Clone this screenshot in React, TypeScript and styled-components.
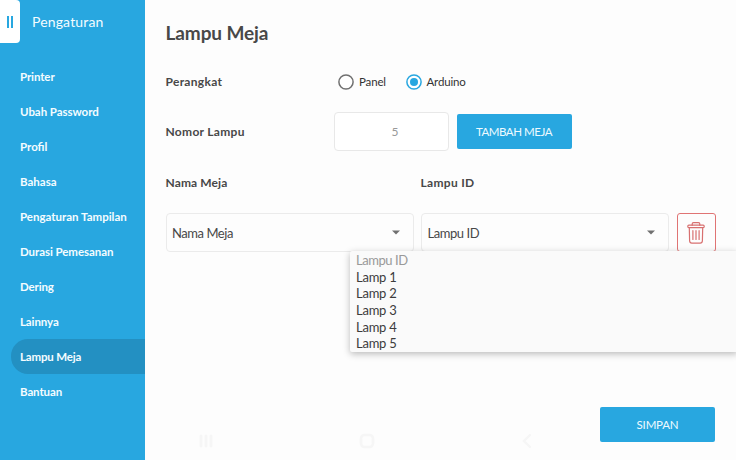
import React from "react";
import styled, { createGlobalStyle } from "styled-components";

const blue = "#28a7e0";

const GlobalStyle = createGlobalStyle`
  *, *::before, *::after { box-sizing: border-box; }
  body {
    margin: 0;
    background: #fdfdfd;
    color: #484848;
    font-family: Lato, "Open Sans", sans-serif;
    overflow: hidden;
  }
  button { font: inherit; cursor: pointer; }
`;

const Screen = styled.div`
  display: flex;
  width: 736px;
  height: 460px;
`;

const Sidebar = styled.aside`
  flex: none;
  width: 145px;
  background: ${blue};
  color: #f4fcff;
`;

const SidebarHeader = styled.header`
  display: flex;
  height: 59px;
`;

const Toggle = styled.button`
  display: flex;
  align-items: center;
  justify-content: center;
  gap: 2px;
  width: 20px;
  height: 43px;
  padding: 0;
  border: 0;
  border-radius: 0 4px 4px 0;
  background: #fff;
`;

const ToggleBar = styled.span`
  width: 2px;
  height: 12px;
  background: ${blue};
`;

const SidebarTitle = styled.span`
  margin-left: 12px;
  font-size: 14px;
  line-height: 44px;
  letter-spacing: 0.15px;
`;

const MenuItem = styled.a<{ $active?: boolean }>`
  display: block;
  height: 35.05px;
  margin-left: 11px;
  padding-left: 9px;
  border-radius: 17px 0 0 17px;
  background: ${(p) => (p.$active ? "#2390c2" : "transparent")};
  font-size: 11.5px;
  font-weight: 700;
  line-height: 36px;
  white-space: nowrap;
`;

const Spaced = styled.span<{ $spacing: number }>`
  letter-spacing: ${(p) => p.$spacing}px;
`;

const Main = styled.main`
  display: flex;
  flex-direction: column;
  flex: 1;
  min-width: 0;
  padding: 13px 21px 0 20.5px;
`;

const Title = styled.h1`
  margin: 0;
  font-size: 19px;
  font-weight: 700;
  line-height: 40px;
  letter-spacing: -0.1px;
`;

const FieldRow = styled.div<{ $height: number }>`
  display: flex;
  align-items: center;
  height: ${(p) => p.$height}px;
`;

const Label = styled.span<{ $width: number; $spacing?: number }>`
  width: ${(p) => p.$width}px;
  font-size: 12px;
  font-weight: 700;
  letter-spacing: ${(p) => p.$spacing ?? 0.3}px;
`;

const Radio = styled.label<{ $width: number }>`
  display: flex;
  align-items: center;
  gap: 5px;
  width: ${(p) => p.$width}px;
  color: #333;
  font-size: 11.5px;
  letter-spacing: -0.15px;
`;

const NumberInput = styled.input`
  width: 115px;
  height: 39px;
  margin-right: 8px;
  border: 1px solid #e8e8e8;
  border-radius: 4px;
  background: #fff;
  color: #999;
  font: 12px Lato, sans-serif;
  padding: 0 0 0 8px;
  text-align: center;
  outline: none;
`;

const PrimaryButton = styled.button<{ $spacing?: number }>`
  width: 115px;
  height: 35px;
  padding: 0;
  border: 0;
  border-radius: 2px;
  background: ${blue};
  color: #effaff;
  font-size: 11.5px;
  letter-spacing: ${(p) => p.$spacing ?? -0.2}px;
`;

const ColumnLabels = styled.div`
  display: grid;
  grid-template-columns: 255px 1fr;
  align-items: center;
  height: 60px;
  padding-bottom: 2px;
`;

const LampRow = styled.div`
  display: grid;
  grid-template-columns: 248px 248px 39px;
  gap: 7.5px;
  height: 39px;
`;

const SelectField = styled.div`
  position: relative;
  display: flex;
  align-items: center;
  justify-content: space-between;
  padding: 0 13px 0 5.5px;
  border: 1px solid #ebebeb;
  border-radius: 4px;
  font-size: 13px;
  letter-spacing: -0.45px;
`;

const Options = styled.ul`
  position: absolute;
  z-index: 2;
  top: 37px;
  left: -72px;
  width: 388px;
  height: 101px;
  margin: 0;
  padding: 1px 0 0 6px;
  border-radius: 2px;
  background: #fafafa;
  box-shadow: 0 2px 7px rgba(0, 0, 0, 0.27);
  list-style: none;
`;

const Option = styled.li<{ $muted?: boolean }>`
  height: 16.7px;
  color: ${(p) => (p.$muted ? "#999" : "#3c3c3c")};
  font-size: 13px;
  line-height: 17px;
  letter-spacing: ${(p) => (p.$muted ? -0.45 : -0.25)}px;
`;

const DeleteButton = styled.button`
  display: flex;
  align-items: center;
  justify-content: center;
  padding: 0;
  border: 1px solid #e07474;
  border-radius: 3px;
  background: transparent;
`;

const Footer = styled.footer`
  display: flex;
  justify-content: flex-end;
  height: 53px;
  margin-top: auto;
  position: relative;
`;

const SystemNav = styled.nav`
  position: absolute;
  left: 32px;
  top: 26px;
  display: flex;
  justify-content: space-between;
  width: 335px;
`;

const Caret = () => (
  <svg width="8" height="5" viewBox="0 0 8 5">
    <path d="M0 .4h8L4 4.6Z" fill="#707070" />
  </svg>
);

const RadioMark = ({ checked }: { checked?: boolean }) => (
  <svg width="16" height="16" viewBox="0 0 16 16">
    <circle cx="8" cy="8" r="7.1" fill="#fff" stroke={checked ? blue : "#707070"} strokeWidth="1.5" />
    {checked && <circle cx="8" cy="8" r="4" fill={blue} />}
  </svg>
);

const TrashIcon = () => (
  <svg width="18" height="22" viewBox="0 0 18 22" fill="none" stroke="#d87070" strokeWidth="1.2" strokeLinejoin="round" strokeLinecap="round">
    <path d="M5.2 3.2V2q0-1.3 1.3-1.3h5q1.3 0 1.3 1.3v1.2" />
    <rect x=".8" y="3.2" width="16.4" height="2.5" rx="1.1" />
    <path d="M2.3 5.8l.3 13q.1 2.4 2.2 2.4h8.4q2.1 0 2.2-2.4l.3-13M5.9 8.7v8.8M9 8.7v8.8M12.1 8.7v8.8" />
  </svg>
);

const items: [string, number][] = [
  ["Printer", -0.1],
  ["Ubah Password", -0.05],
  ["Profil", 0],
  ["Bahasa", 0],
  ["Pengaturan Tampilan", 0],
  ["Durasi Pemesanan", -0.07],
  ["Dering", -0.15],
  ["Lainnya", -0.1],
  ["Lampu Meja", -0.18],
  ["Bantuan", -0.1],
];

const lamps = ["Lamp 1", "Lamp 2", "Lamp 3", "Lamp 4", "Lamp 5"];

export default function App() {
  return (
    <Screen>
      <GlobalStyle />
      <Sidebar>
        <SidebarHeader>
          <Toggle aria-label="Menu">
            <ToggleBar />
            <ToggleBar />
          </Toggle>
          <SidebarTitle>Pengaturan</SidebarTitle>
        </SidebarHeader>
        {items.map(([name, spacing]) => (
          <MenuItem key={name} $active={name === "Lampu Meja"}>
            <Spaced $spacing={spacing}>{name}</Spaced>
          </MenuItem>
        ))}
      </Sidebar>
      <Main>
        <Title>Lampu Meja</Title>
        <FieldRow $height={57}>
          <Label $width={172.5}>Perangkat</Label>
          <Radio $width={67.5}>
            <RadioMark />
            Panel
          </Radio>
          <Radio $width={80}>
            <RadioMark checked />
            Arduino
          </Radio>
        </FieldRow>
        <FieldRow $height={43}>
          <Label $width={168}>Nomor Lampu</Label>
          <NumberInput defaultValue="5" />
          <PrimaryButton $spacing={-0.45}>TAMBAH MEJA</PrimaryButton>
        </FieldRow>
        <ColumnLabels>
          <Label $width={200} $spacing={0.1}>Nama Meja</Label>
          <Label $width={200}>Lampu ID</Label>
        </ColumnLabels>
        <LampRow>
          <SelectField>
            Nama Meja
            <Caret />
          </SelectField>
          <SelectField>
            Lampu ID
            <Caret />
            <Options>
              <Option $muted>Lampu ID</Option>
              {lamps.map((lamp) => (
                <Option key={lamp}>{lamp}</Option>
              ))}
            </Options>
          </SelectField>
          <DeleteButton aria-label="Hapus">
            <TrashIcon />
          </DeleteButton>
        </LampRow>
        <Footer>
          <SystemNav>
            <svg width="16" height="16" viewBox="0 0 16 16" stroke="#f6f6f6" strokeWidth="2.8" strokeLinecap="round">
              <path d="M3 3v10M8 3v10M13 3v10" />
            </svg>
            <svg width="16" height="16" viewBox="0 0 16 16" fill="none" stroke="#f6f6f6" strokeWidth="2.6">
              <rect x="2" y="2" width="12" height="12" rx="3.5" />
            </svg>
            <svg width="12" height="16" viewBox="0 0 12 16" fill="none" stroke="#f6f6f6" strokeWidth="2.4" strokeLinecap="round">
              <path d="M9 2 3 8l6 6" />
            </svg>
          </SystemNav>
          <PrimaryButton>SIMPAN</PrimaryButton>
        </Footer>
      </Main>
    </Screen>
  );
}
